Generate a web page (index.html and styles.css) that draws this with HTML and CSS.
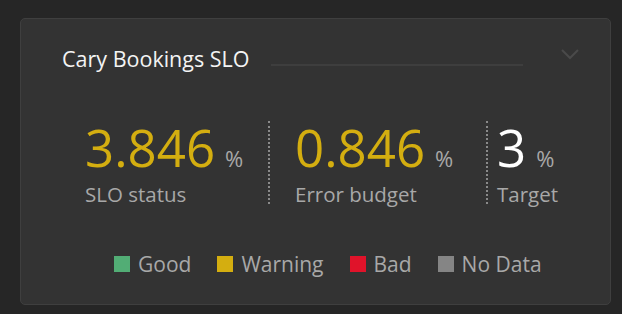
FILE: index.html
```html
<!DOCTYPE html>
<html lang="en">
<head>
  <meta charset="UTF-8" />
  <meta name="viewport" content="width=device-width, initial-scale=1" />
  <title>Cary Bookings SLO</title>
  <link rel="stylesheet" href="styles.css">
</head>
<body>

<div class="tile">
  <div class="tile-head">
    <h2>Cary Bookings SLO</h2>
    <span class="head-line"></span>
    <svg class="chevron" width="18" height="11" viewBox="0 0 18 11">
      <path d="M1 1 L9 9 L17 1" fill="none" stroke="#4a4a4a" stroke-width="2" />
    </svg>
  </div>

  <div class="metrics">
    <div class="metric first">
      <div class="value warn">3.846<span class="unit">%</span></div>
      <div class="label">SLO status</div>
    </div>
    <div class="metric second">
      <div class="value warn">0.846<span class="unit">%</span></div>
      <div class="label">Error budget</div>
    </div>
    <div class="metric third">
      <div class="value">3<span class="unit">%</span></div>
      <div class="label">Target</div>
    </div>
  </div>

  <div class="legend">
    <span class="item"><i class="swatch good"></i>Good</span>
    <span class="item"><i class="swatch warning"></i>Warning</span>
    <span class="item"><i class="swatch bad"></i>Bad</span>
    <span class="item"><i class="swatch nodata"></i>No Data</span>
  </div>
</div>

</body>
</html>
```

FILE: styles.css
```css
* { box-sizing: border-box; }
body {
  margin: 0;
  padding: 18px 11px 8px 20px;
  background: #262626;
  font-family: 'Open Sans', sans-serif;
  color: #a8a8a8;
}
.tile {
  width: 591px;
  height: 287px;
  background: #333333;
  border: 1px solid #3f3f3f;
  border-radius: 5px;
}
.tile-head {
  display: flex;
  align-items: center;
  padding: 26px 0 0 41px;
  height: 54px;
}
.tile-head h2 {
  margin: 0;
  font-size: 21.5px;
  font-weight: 400;
  line-height: 24px;
  color: #f4f4f4;
}
.head-line {
  width: 252px;
  height: 2px;
  margin: 12px 0 0 21px;
  background: #3e3e3e;
}
.chevron {
  margin: -10px 0 0 38px;
}
.metrics {
  display: flex;
  margin-top: 48px;
  height: 83px;
}
.metric {
  padding-top: 4px;
}
.metric.first {
  padding-left: 64px;
  width: 249px;
  border-right: 2px dotted #8a8a8a;
}
.metric.second {
  padding-left: 25px;
  width: 218px;
  border-right: 2px dotted #8a8a8a;
}
.metric.third {
  padding-left: 9px;
}
.value {
  font-size: 51px;
  line-height: 44px;
  color: #ffffff;
  white-space: nowrap;
}
.value.warn {
  color: #d4ae10;
}
.unit {
  font-size: 22px;
  color: #a8a8a8;
  margin-left: 10px;
}
.label {
  font-size: 20.5px;
  line-height: 24px;
  margin-top: 2px;
}
.legend {
  display: flex;
  gap: 26px;
  padding-left: 93px;
  margin-top: 48px;
}
.item {
  display: flex;
  align-items: center;
  gap: 8px;
  font-size: 21px;
  line-height: 24px;
}
.swatch {
  width: 16px;
  height: 16px;
}
.swatch.good { background: #52ad75; }
.swatch.warning { background: #d4ae10; }
.swatch.bad { background: #e0132a; }
.swatch.nodata { background: #858585; }
```
